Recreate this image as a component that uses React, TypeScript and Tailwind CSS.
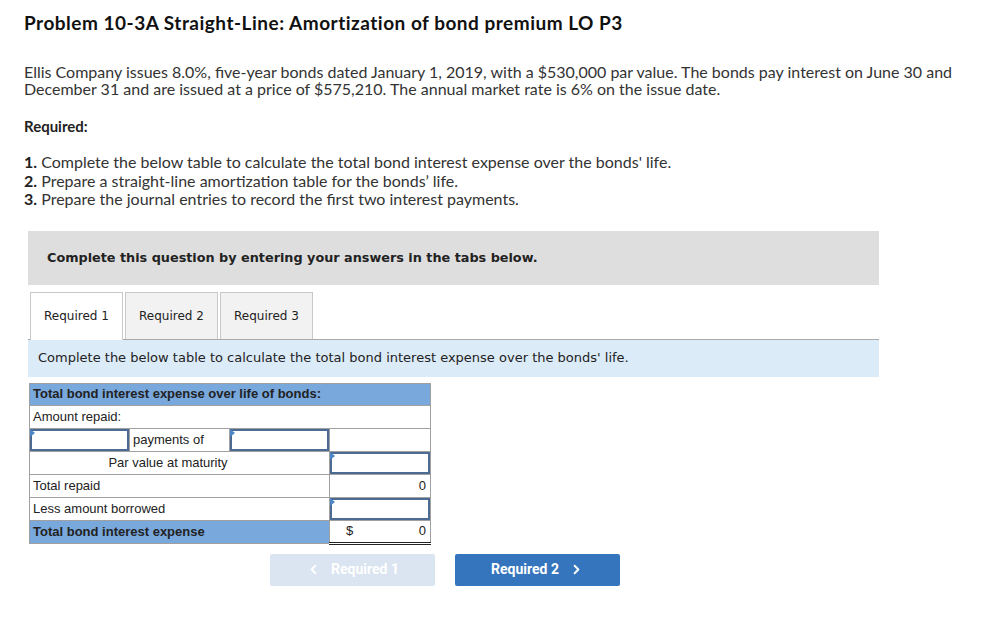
import React from 'react';
import { ChevronLeft, ChevronRight } from 'lucide-react';

const flag = (
  <span className="absolute left-0 top-0 w-0 h-0 border-t-[4px] border-b-[4px] border-l-[5px] border-t-transparent border-b-transparent border-l-[#4a86c8]" />
);

function InputCell() {
  return (
    <td className="relative p-0 border border-[#a0a0a0] h-[23px]">
      <div className="absolute inset-0 border-2 border-[#4b6b94] bg-white" />
      {flag}
    </td>
  );
}

const tabs = ['Required 1', 'Required 2', 'Required 3'];

export default function App() {
  return (
    <div className="w-[981px] h-[640px] bg-white text-[#222] overflow-hidden">
      <div className="pl-[24px] pt-[9px] font-['Lato',sans-serif]">
        <h1 className="text-[19px] font-bold tracking-[0.5px] text-[#111]">
          Problem 10-3A Straight-Line: Amortization of bond premium LO P3
        </h1>
        <p className="mt-[25px] text-[16px] leading-[17px] text-[#333] w-[945px]">
          Ellis Company issues 8.0%, five-year bonds dated January 1, 2019, with a $530,000 par value. The bonds pay interest on June 30 and December 31 and are issued at a price of $575,210. The annual market rate is 6% on the issue date.
        </p>
        <p className="mt-[18px] text-[15px] font-bold text-[#222]">Required:</p>
        <div className="mt-[16px] text-[16px] leading-[18.5px] text-[#333]">
          <p><b className="text-[#222]">1.</b> Complete the below table to calculate the total bond interest expense over the bonds' life.</p>
          <p><b className="text-[#222]">2.</b> Prepare a straight-line amortization table for the bonds’ life.</p>
          <p><b className="text-[#222]">3.</b> Prepare the journal entries to record the first two interest payments.</p>
        </div>
      </div>

      <div className="ml-[28px] w-[851px]">
        <div className="mt-[22px] h-[54px] bg-[#dedede] flex items-center pl-[19px] font-['DejaVu_Sans',Verdana,sans-serif] text-[12.8px] font-bold text-[#222]">
          Complete this question by entering your answers in the tabs below.
        </div>

        <div className="mt-[7px] flex gap-[2px] pl-[2px] border-b border-[#a9a9a9] font-['DejaVu_Sans',Verdana,sans-serif] text-[12px] text-[#222]">
          {tabs.map((t, i) => (
            <div
              key={t}
              className={
                'w-[93px] h-[47px] flex items-center justify-center border border-b-0 border-[#c8c8c8] ' +
                (i === 0 ? 'bg-white -mb-px h-[48px]' : 'bg-[#f2f2f2]')
              }
            >
              {t}
            </div>
          ))}
        </div>

        <div className="h-[37px] bg-[#dcebf8] flex items-center pl-[10px] font-['DejaVu_Sans',Verdana,sans-serif] text-[13px] text-[#222]">
          Complete the below table to calculate the total bond interest expense over the bonds' life.
        </div>

        <table className="mt-[6px] ml-[1px] border-collapse table-fixed w-[401px] font-['Liberation_Sans',Arial,sans-serif] text-[13px] text-[#222]">
          <colgroup>
            <col className="w-[100px]" />
            <col className="w-[100px]" />
            <col className="w-[100px]" />
            <col className="w-[101px]" />
          </colgroup>
          <tbody>
            <tr className="h-[22px] bg-[#79a8dd]">
              <td colSpan={4} className="border border-[#a0a0a0] px-[3px] font-bold">Total bond interest expense over life of bonds:</td>
            </tr>
            <tr className="h-[23px]">
              <td colSpan={4} className="border border-[#a0a0a0] px-[3px]">Amount repaid:</td>
            </tr>
            <tr className="h-[23px]">
              <InputCell />
              <td className="border border-[#a0a0a0] px-[3px]">payments of</td>
              <InputCell />
              <td className="border border-[#a0a0a0]" />
            </tr>
            <tr className="h-[23px]">
              <td colSpan={3} className="border border-[#a0a0a0] text-center pr-[23px]">Par value at maturity</td>
              <InputCell />
            </tr>
            <tr className="h-[23px]">
              <td colSpan={3} className="border border-[#a0a0a0] px-[3px]">Total repaid</td>
              <td className="border border-[#a0a0a0] px-[4px] text-right">0</td>
            </tr>
            <tr className="h-[23px]">
              <td colSpan={3} className="border border-[#a0a0a0] px-[3px]">Less amount borrowed</td>
              <InputCell />
            </tr>
            <tr className="h-[23px]">
              <td colSpan={3} className="border border-[#a0a0a0] px-[3px] font-bold bg-[#79a8dd]">Total bond interest expense</td>
              <td className="border border-[#a0a0a0] border-b-[3px] border-b-[#222] border-double px-[4px]">
                <div className="flex justify-between pl-[12px]">
                  <span>$</span>
                  <span>0</span>
                </div>
              </td>
            </tr>
          </tbody>
        </table>

        <div className="mt-[9px] flex gap-[20px] pl-[242px] font-['Roboto',sans-serif] text-[14px] font-bold text-white">
          <div className="w-[165px] h-[32px] rounded-[2px] bg-[#dbe4f1] flex items-center justify-center gap-[10px]">
            <ChevronLeft size={15} strokeWidth={3} />
            <span>Required 1</span>
          </div>
          <div className="w-[165px] h-[32px] rounded-[2px] bg-[#3575bd] flex items-center justify-center gap-[10px]">
            <span>Required 2</span>
            <ChevronRight size={15} strokeWidth={3} />
          </div>
        </div>
      </div>
    </div>
  );
}
